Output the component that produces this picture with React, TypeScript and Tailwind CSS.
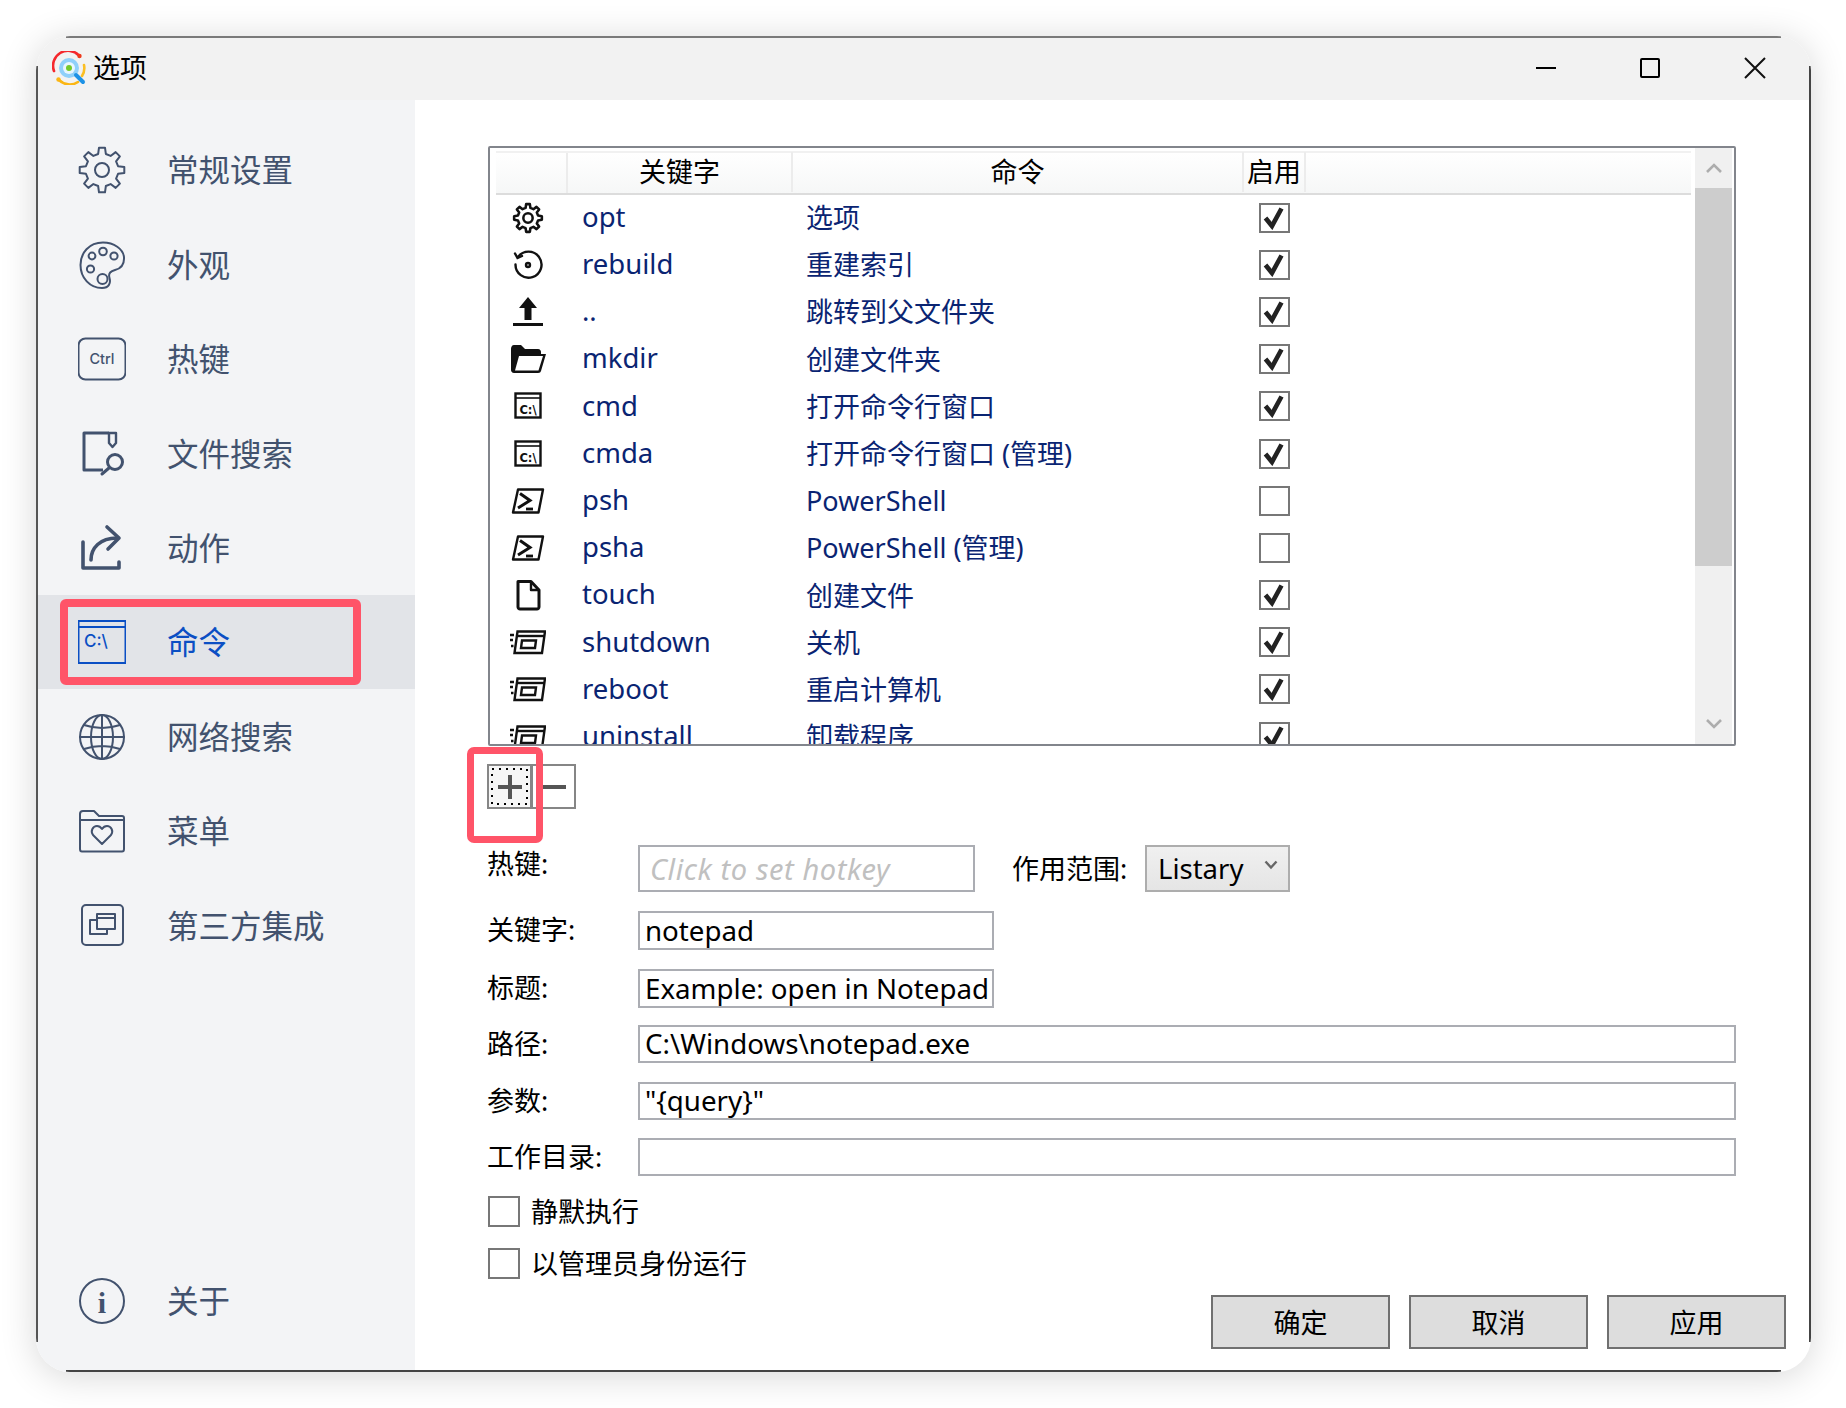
import React from "react"

const SLATE = "#42526e"
const BLUE = "#0b4fc4"

function gearPath(cx: number, cy: number, outer: number, root: number, teeth = 8) {
  const pts: string[] = []
  const step = (Math.PI * 2) / teeth
  for (let i = 0; i < teeth; i++) {
    const a = i * step - Math.PI / 2
    const list: [number, number][] = [
      [root, a - step * 0.3],
      [outer, a - step * 0.17],
      [outer, a + step * 0.17],
      [root, a + step * 0.3],
    ]
    list.forEach(([r, t]) => pts.push(`${(cx + r * Math.cos(t)).toFixed(2)} ${(cy + r * Math.sin(t)).toFixed(2)}`))
  }
  return "M" + pts.join("L") + "Z"
}

function Ico({ children, size = 48, color = SLATE, sw = 2 }: { children: React.ReactNode; size?: number; color?: string; sw?: number }) {
  return (
    <svg width={size} height={size} viewBox="0 0 48 48" fill="none" stroke={color} strokeWidth={sw} strokeLinejoin="round" strokeLinecap="round">
      {children}
    </svg>
  )
}

const sideIcons: Record<string, React.ReactNode> = {
  gear: (
    <Ico>
      <path d={gearPath(24, 24, 22.5, 16.5)} />
      <circle cx="24" cy="24" r="7" />
    </Ico>
  ),
  palette: (
    <Ico>
      <path d="M25 1.5C11 1.5 2.5 12 2.5 24C2.5 37 12 47 24 47C31 47 33 42 31.5 37C30 32 33 30 37 29C43 27.5 46.5 23 46 16C45 8 36 1.5 25 1.5Z" />
      <circle cx="14" cy="15" r="3.4" />
      <circle cx="25" cy="10.5" r="3.8" />
      <circle cx="36" cy="15" r="3.6" />
      <circle cx="12.5" cy="28" r="3.6" />
      <circle cx="24.5" cy="38" r="5" />
    </Ico>
  ),
  ctrl: (
    <Ico>
      <rect x="0.500" y="3.500" width="47" height="41" rx="7" />
      <text x="24" y="29" textAnchor="middle" fontSize="14.500" fontWeight="500" fill={SLATE} stroke="none" fontFamily="Inter, sans-serif">Ctrl</text>
    </Ico>
  ),
  file: (
    <Ico sw={3}>
      <path d="M31 4H6V41H25" strokeLinecap="butt" />
      <path d="M31 4H38V14L34.500 18L31 14Z" strokeWidth="2.400" />
      <circle cx="37" cy="33" r="7.500" />
      <path d="M31 39L24 45" />
    </Ico>
  ),
  action: (
    <Ico sw={3.6}>
      <path d="M5 18V44H41V38" />
      <path d="M13 36C13 24 22 14 39 14" />
      <path d="M29 3L41 14L30 25" />
    </Ico>
  ),
  cmd: (
    <Ico color={BLUE}>
      <rect x="0.500" y="3" width="47" height="42" />
      <path d="M1 9H47" />
      <text x="6" y="29" fontSize="17" fontWeight="500" fill={BLUE} stroke="none" fontFamily="Inter, sans-serif">C:\</text>
    </Ico>
  ),
  globe: (
    <Ico>
      <circle cx="24" cy="24" r="22" />
      <ellipse cx="24" cy="24" rx="11" ry="22" />
      <path d="M24 2V46M2 24H46M6 12C18 16 30 16 42 12M6 36C18 32 30 32 42 36" />
    </Ico>
  ),
  menu: (
    <Ico>
      <path d="M2 7C2 5 3 4 5 4H16L21 9H44C45.500 9 46 10 46 11V42C46 44 45 44.500 44 44.500H4C3 44.500 2 44 2 42Z" />
      <path d="M2 13H46" />
      <path d="M24 37L15 28C12 24 15 19 19 19C21 19 23 20.500 24 22C25 20.500 27 19 29 19C33 19 36 24 33 28Z" />
    </Ico>
  ),
  third: (
    <Ico>
      <rect x="4" y="4" width="41" height="40" rx="4" />
      <rect x="19" y="13" width="18" height="15" />
      <path d="M19 17H37" />
      <path d="M19 19H12V33H29V28" />
    </Ico>
  ),
  info: (
    <Ico>
      <circle cx="24" cy="24" r="22" />
      <text x="24" y="36" textAnchor="middle" fontSize="30" fontWeight="700" fill={SLATE} stroke="none" fontFamily="'Liberation Serif', serif">i</text>
    </Ico>
  ),
}

function SmallWin() {
  return (
    <svg width="36" height="32" viewBox="0 0 36 32" fill="none" stroke="#111" strokeWidth="2.400" strokeLinejoin="miter">
      <path d="M7.500 5.500H35L32 27H4.500Z" />
      <path d="M7 10H34.500" />
      <path d="M12 14.500H26L25 22H11Z" />
      <path d="M0 9H4M0 14H3M1 20H3.500" />
    </svg>
  )
}

function SmallCmd() {
  return (
    <svg width="32" height="32" viewBox="0 0 32 32" fill="none" stroke="#111" strokeWidth="2.400">
      <rect x="3.500" y="3.500" width="25" height="24" />
      <path d="M3.500 8H28.500" strokeWidth="1.600" />
      <text x="16" y="23.500" textAnchor="middle" fontSize="11.500" fontWeight="700" fill="#111" stroke="none" fontFamily="'DejaVu Sans', sans-serif">C:\</text>
    </svg>
  )
}

function SmallPs() {
  return (
    <svg width="34" height="32" viewBox="0 0 34 32" fill="none" stroke="#111" strokeWidth="2.400" strokeLinejoin="round">
      <path d="M7 4.500H32L27.500 27.500H2Z" />
      <path d="M9 8.500L19 15.500L7 23" strokeWidth="3" strokeLinejoin="miter" />
      <path d="M15 24H22" strokeWidth="2.800" />
    </svg>
  )
}

const tableIcons: Record<string, React.ReactNode> = {
  gear: (
    <Ico size={32} color="#111" sw={3.8}>
      <path d={gearPath(24, 24, 21, 15.5)} />
      <circle cx="24" cy="24" r="7" />
    </Ico>
  ),
  rebuild: (
    <svg width="32" height="32" viewBox="0 0 32 32" fill="none" stroke="#111" strokeWidth="2.400" strokeLinecap="round">
      <path d="M6 8A13 13 0 1 1 3.500 15.500" />
      <path d="M3 4.500L5.500 9L10 7" />
      <circle cx="16" cy="16" r="2" />
    </svg>
  ),
  up: (
    <svg width="32" height="32" viewBox="0 0 32 32" fill="#111">
      <path d="M16 1L25 12H19.500V24H12.500V12H7Z" />
      <rect x="1" y="27" width="30" height="3" />
    </svg>
  ),
  folder: (
    <svg width="36" height="32" viewBox="0 0 36 32" fill="none">
      <path d="M1 6C1 4 2 2 4 2H11L15 6H28C30 6 31 7.500 31 9V11H36L31 28C30.500 29 30 30 28 30H4C2 30 1 28.500 1 27Z" fill="#111" />
      <path d="M9 13H33L28.500 27.500H5Z" fill="#fff" />
    </svg>
  ),
  cmd: <SmallCmd />,
  ps: <SmallPs />,
  doc: (
    <svg width="32" height="32" viewBox="0 0 32 32" fill="none" stroke="#111" strokeWidth="3" strokeLinejoin="round">
      <path d="M6 2.500H19L27 11V28C27 29 26 30 25 30H8C7 30 6 29 6 28Z" />
      <path d="M19 3V11H27" strokeWidth="2.400" />
    </svg>
  ),
  win: <SmallWin />,
}

const navItems = [
  { icon: "gear", label: "常规设置" },
  { icon: "palette", label: "外观" },
  { icon: "ctrl", label: "热键" },
  { icon: "file", label: "文件搜索" },
  { icon: "action", label: "动作" },
  { icon: "cmd", label: "命令", active: true },
  { icon: "globe", label: "网络搜索" },
  { icon: "menu", label: "菜单" },
  { icon: "third", label: "第三方集成" },
]

const rows = [
  { icon: "gear", key: "opt", cmd: "选项", on: true },
  { icon: "rebuild", key: "rebuild", cmd: "重建索引", on: true },
  { icon: "up", key: "..", cmd: "跳转到父文件夹", on: true },
  { icon: "folder", key: "mkdir", cmd: "创建文件夹", on: true },
  { icon: "cmd", key: "cmd", cmd: "打开命令行窗口", on: true },
  { icon: "cmd", key: "cmda", cmd: "打开命令行窗口 (管理)", on: true },
  { icon: "ps", key: "psh", cmd: "PowerShell", on: false },
  { icon: "ps", key: "psha", cmd: "PowerShell (管理)", on: false },
  { icon: "doc", key: "touch", cmd: "创建文件", on: true },
  { icon: "win", key: "shutdown", cmd: "关机", on: true },
  { icon: "win", key: "reboot", cmd: "重启计算机", on: true },
  { icon: "win", key: "uninstall", cmd: "卸载程序", on: true },
]

function Logo() {
  return (
    <svg width="34" height="34" viewBox="0 0 34 34" fill="none">
      <path d="M27 4.500A15 15 0 0 0 2 20" stroke="#f5282d" strokeWidth="2.600" strokeLinecap="round" />
      <circle cx="27.500" cy="5" r="2.200" fill="#ee3a1c" />
      <path d="M32 14A15 15 0 0 1 30 25" stroke="#fbbf24" strokeWidth="2.600" strokeLinecap="round" />
      <path d="M26 31A15 15 0 0 1 7 29" stroke="#fbb614" strokeWidth="2.600" strokeLinecap="round" />
      <circle cx="6.500" cy="28.500" r="2.200" fill="#fbb614" />
      <circle cx="17" cy="17" r="10" fill="#8fd0fa" />
      <circle cx="17" cy="17" r="6" fill="#e9f6fe" />
      <circle cx="17" cy="17" r="3" fill="#74c92c" />
      <path d="M24 24L31 31" stroke="#1d92e6" strokeWidth="4" strokeLinecap="round" />
    </svg>
  )
}

function NavRow({ icon, label, active }: { icon: string; label: string; active?: boolean }) {
  return (
    <div className={active ? "relative flex h-[94.4px] items-center bg-[#e2e4e8] pl-[42px]" : "relative flex h-[94.4px] items-center pl-[42px]"}>
      <div className="flex w-[89px] items-center">{sideIcons[icon]}</div>
      <span className={active ? "text-[31.5px] leading-none text-[#0b4fc4]" : "text-[31.5px] leading-none text-[#42526e]"}>{label}</span>
      {active && <div className="absolute left-[24px] top-[4px] h-[86px] w-[301px] rounded-[6px] border-[8px] border-[#ff5468]" />}
    </div>
  )
}

function Check({ on, size = "small" }: { on: boolean; size?: string }) {
  return (
    <div className={size === "small" ? "flex h-[30px] w-[31px] items-center justify-center border-2 border-[#777] bg-white" : "flex h-[31px] w-[32px] items-center justify-center border-2 border-[#777] bg-white"}>
      {on && (
        <svg width="24" height="24" viewBox="0 0 24 24" fill="none">
          <path d="M3.500 12L10 20L19.500 2.500" stroke="#222" strokeWidth="4.600" strokeLinejoin="miter" />
        </svg>
      )}
    </div>
  )
}

function Field({ label, value, wide, className }: { label: string; value: string; wide?: boolean; className: string }) {
  return (
    <div className={"flex items-center " + className}>
      <span className="ml-[-1px] w-[151px] shrink-0 -translate-y-[1px] text-[27px] leading-none text-black">{label}</span>
      <div className={wide ? "flex h-[38px] flex-1 items-center border-2 border-[#abadb3] pl-[5px] text-[27.7px] text-black" : "flex h-[39px] w-[356px] items-center border-2 border-[#abadb3] pl-[5px] text-[27.7px] text-black"}>
        {value}
      </div>
    </div>
  )
}

function FootBtn({ label }: { label: string }) {
  return (
    <div className="flex h-[54px] w-[179px] items-center justify-center border-2 border-[#707070] bg-[#dddddd] text-[27px] leading-none text-black">
      {label}
    </div>
  )
}

export default function App() {
  return (
    <div className="h-[1408px] w-[1846px] bg-white pl-[36px] pt-[36px] font-['Noto_Sans','Noto_Sans_CJK_SC',sans-serif]">
      <div className="relative flex h-[1336px] w-[1775px] flex-col overflow-hidden rounded-[34px] bg-white shadow-[0_4px_36px_rgba(0,0,0,0.16)]">
        {/* titlebar */}
        <div className="flex h-[64px] shrink-0 items-center bg-[#f2f2f2] pl-[16px]">
          <Logo />
          <span className="ml-[7px] -translate-y-[1px] text-[27px] leading-none text-black">选项</span>
          <div className="ml-auto flex items-center">
            <div className="mr-[84px] h-[2px] w-[20px] bg-black" />
            <div className="mr-[84px] h-[20px] w-[20px] rounded-[2px] border-2 border-black" />
            <svg width="22" height="22" viewBox="0 0 22 22" className="mr-[45px]" stroke="#111" strokeWidth="2">
              <path d="M1 1L21 21M21 1L1 21" />
            </svg>
          </div>
        </div>

        <div className="flex min-h-0 flex-1">
          {/* sidebar */}
          <div className="flex w-[379px] shrink-0 flex-col bg-[#f3f4f6] pt-[23px]">
            {navItems.map((n) => (
              <NavRow key={n.label} icon={n.icon} label={n.label} active={n.active} />
            ))}
            <div className="mt-auto mb-[24px]">
              <NavRow icon="info" label="关于" />
            </div>
          </div>

          {/* main */}
          <div className="relative flex-1 pl-[73px] pr-[75px] pt-[46px]">
            <div className="relative h-[600px] overflow-hidden rounded-[2px] border-2 border-[#82858c] pl-[6px] pr-[2px]">
              <div className="flex h-full">
                <div className="min-w-0 flex-1 overflow-hidden">
                  <div className="mt-[3px] flex h-[44px] border-b-2 border-t-2 border-b-[#dcdcdc] border-t-[#f1f1f1] bg-gradient-to-b from-white to-[#f6f7f7] text-[27px] text-black">
                    <div className="w-[72px] border-r-2 border-[#ececec]" />
                    <div className="flex w-[225px] -translate-y-[1px] items-center justify-center border-r-2 border-[#ececec]">关键字</div>
                    <div className="flex w-[451px] -translate-y-[1px] items-center justify-center border-r-2 border-[#ececec]">命令</div>
                    <div className="flex w-[62px] -translate-y-[1px] items-center justify-center border-r-2 border-[#ececec]">启用</div>
                  </div>
                  <div className="mt-[-1px]">
                    {rows.map((r) => (
                      <div key={r.key} className="flex h-[47.2px] items-center text-[27px] leading-none text-[#0a2472]">
                        <div className="flex w-[72px] justify-center pr-[9px]">{tableIcons[r.icon]}</div>
                        <div className="w-[225px] -translate-y-[1px] pl-[14px] text-[27.5px]">{r.key}</div>
                        <div className="w-[451px] pl-[13px]">{r.cmd}</div>
                        <div className="flex w-[62px] justify-center pr-[2px]">
                          <Check on={r.on} />
                        </div>
                      </div>
                    ))}
                  </div>
                </div>
                {/* scrollbar */}
                <div className="ml-[4px] flex w-[37px] shrink-0 flex-col bg-[#f0f0f0]">
                  <div className="flex h-[40px] items-center justify-center">
                    <svg width="18" height="12" viewBox="0 0 18 12" fill="none" stroke="#adadad" strokeWidth="2.600">
                      <path d="M2 10L9 3L16 10" />
                    </svg>
                  </div>
                  <div className="h-[378px] bg-[#cdcdcd]" />
                  <div className="mt-auto flex h-[40px] items-center justify-center">
                    <svg width="18" height="12" viewBox="0 0 18 12" fill="none" stroke="#adadad" strokeWidth="2.600">
                      <path d="M2 2L9 9L16 2" />
                    </svg>
                  </div>
                </div>
              </div>
            </div>

            {/* add / remove */}
            <div className="relative mt-[18px] ml-[-1px] flex h-[45px]">
              <div className="relative z-0 flex h-[45px] w-[45px] items-center justify-center border-2 border-[#868686] bg-[#f6f6f6]">
                <svg width="37" height="37" viewBox="0 0 37 37" fill="none" className="absolute left-[2px] top-[2px]">
                  <rect x="1" y="1" width="35" height="35" stroke="#000" strokeWidth="2" strokeDasharray="2 5" />
                </svg>
                <svg width="26" height="26" viewBox="0 0 26 26" stroke="#555" strokeWidth="4" className="relative">
                  <path d="M13 1V25M1 13H25" />
                </svg>
              </div>
              <div className="ml-[-1px] flex h-[45px] w-[45px] items-center justify-center border-2 border-[#868686]">
                <svg width="26" height="6" viewBox="0 0 26 6" stroke="#555" strokeWidth="4">
                  <path d="M1 3H25" />
                </svg>
              </div>
              <div className="absolute left-[-20px] top-[-17px] h-[96px] w-[76px] rounded-[7px] border-[7px] border-[#ff5468]" />
            </div>

            {/* hotkey row */}
            <div className="mt-[36px] flex h-[47px] items-center">
              <span className="ml-[-1px] w-[151px] shrink-0 -translate-y-[5px] text-[27px] leading-none text-black">热键:</span>
              <div className="flex h-[47px] w-[337px] items-center border-2 border-[#abadb3] pl-[10px] text-[29px] italic tracking-[0.6px] text-[#c0c0c0]">Click to set hotkey</div>
              <span className="ml-[37px] w-[133px] shrink-0 text-[27px] leading-none text-black">作用范围:</span>
              <div className="flex h-[47px] w-[145px] items-center justify-between border-2 border-[#adadad] bg-gradient-to-b from-[#f0f0f0] to-[#e5e5e5] pl-[11px] pr-[10px] text-[27.5px] text-black">
                Listary
                <svg width="14" height="10" viewBox="0 0 14 10" fill="none" stroke="#666" strokeWidth="2.400" className="mb-[8px]">
                  <path d="M1.500 1.500L7 7.500L12.500 1.500" />
                </svg>
              </div>
            </div>

            <Field className="mt-[19px]" label="关键字:" value="notepad" />
            <Field className="mt-[19px]" label="标题:" value="Example: open in Notepad" />
            <Field className="mt-[17px]" label="路径:" value="C:\Windows\notepad.exe" wide />
            <Field className="mt-[19px]" label="参数:" value={'"{query}"'} wide />
            <Field className="mt-[18px]" label="工作目录:" value="" wide />

            <div className="mt-[20px] flex items-center gap-[11px] text-[27px] leading-none text-black">
              <Check on={false} size="big" />
              静默执行
            </div>
            <div className="mt-[21px] flex items-center gap-[11px] text-[27px] leading-none text-black">
              <Check on={false} size="big" />
              以管理员身份运行
            </div>

            <div className="mr-[-50px] mt-[16px] flex justify-end gap-[19px]">
              <FootBtn label="确定" />
              <FootBtn label="取消" />
              <FootBtn label="应用" />
            </div>
          </div>
        </div>

        {/* window edge lines */}
        <div className="absolute left-[30px] right-[30px] top-0 h-[2px] bg-[#7a7a7a]" />
        <div className="absolute bottom-0 left-[30px] right-[30px] h-[2px] bg-[#444]" />
        <div className="absolute bottom-[30px] left-0 top-[30px] w-[2px] bg-[#555]" />
        <div className="absolute bottom-[30px] right-0 top-[30px] w-[2px] bg-[#444]" />
      </div>
    </div>
  )
}
